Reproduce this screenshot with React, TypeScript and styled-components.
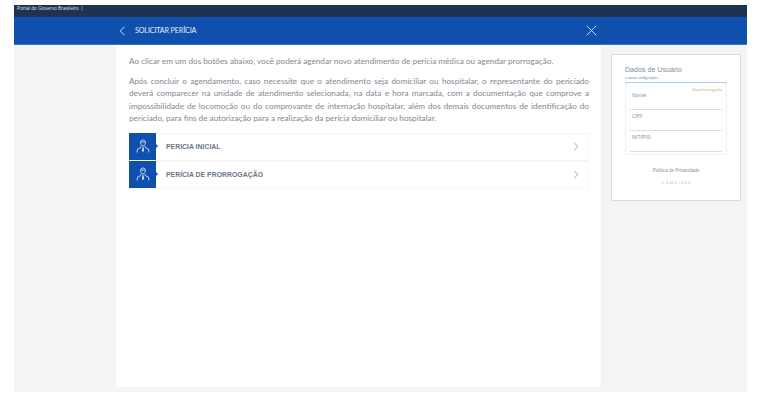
import React from "react";
import styled, { createGlobalStyle } from "styled-components";

const GlobalStyle = createGlobalStyle`
  html, body {
    margin: 0;
    padding: 0;
    background: #fff;
    font-family: "Lato", "Liberation Sans", sans-serif;
  }
`;

const Page = styled.div`
  width: 733px;
  height: 387px;
  margin: 5px 0 0 14px;
  display: flex;
  flex-direction: column;
  background: #f4f4f4;
`;

const GovBar = styled.div`
  height: 12px;
  flex: none;
  background: #1f3350;
  color: #d8dee8;
  font-family: "Liberation Sans", sans-serif;
  font-size: 4.9px;
  line-height: 8px;
  padding-left: 3px;
  box-sizing: border-box;
`;

const TitleBar = styled.div`
  height: 28px;
  flex: none;
  box-sizing: border-box;
  background: #0f50ae;
  border-bottom: 1px solid #3c73c0;
  padding: 0 150px 0 105px;
  display: flex;
  align-items: center;
  color: #e8eef8;
`;

const BackLink = styled.svg`
  width: 7px;
  height: 10px;
  margin-right: 9px;
`;

const PageTitle = styled.div`
  flex: 1;
  font-size: 7.2px;
  letter-spacing: -0.15px;
  color: #e6edf8;
`;

const CloseIcon = styled.svg`
  width: 11px;
  height: 11px;
`;

const Body = styled.div`
  flex: 1;
  display: flex;
  min-height: 0;
  padding-left: 102px;
  padding-bottom: 5px;
`;

const Main = styled.main`
  width: 485px;
  flex: none;
  background: #fff;
  box-sizing: border-box;
  padding: 10px 12px 0 13px;
`;

const Paragraph = styled.p<{ $justify?: boolean }>`
  margin: 0 0 7px;
  font-size: 8.2px;
  line-height: 12.6px;
  color: #83888f;
  text-align: ${(p) => (p.$justify ? "justify" : "left")};
`;

const Options = styled.div`
  margin-top: 8px;
  display: flex;
  flex-direction: column;
`;

const Option = styled.div`
  height: 28px;
  display: flex;
  align-items: center;
  border-top: 1px solid #f4f4f4;
  border-bottom: 1px solid #f6f6f6;
  border-right: 1px solid #f6f6f6;
  box-sizing: border-box;
`;

const OptionBadge = styled.div`
  position: relative;
  width: 27px;
  height: 27px;
  flex: none;
  background: #0f50ae;
  display: flex;
  align-items: center;
  justify-content: center;

  &::after {
    content: "";
    position: absolute;
    right: -2px;
    top: 11px;
    border-left: 2px solid #0f50ae;
    border-top: 2px solid transparent;
    border-bottom: 2px solid transparent;
  }
`;

const OptionLabel = styled.div`
  flex: 1;
  margin-left: 10px;
  font-family: "Liberation Sans", sans-serif;
  font-size: 6.9px;
  font-weight: 700;
  color: #6a7685;
`;

const Chevron = styled.svg`
  width: 6px;
  height: 9px;
  margin-right: 9px;
`;

const Aside = styled.aside`
  width: 130px;
  height: 147px;
  margin: 9px 0 0 10px;
  box-sizing: border-box;
  background: #fff;
  border: 1px solid #d9dcde;
  padding: 11px 13px 0 13px;
  display: flex;
  flex-direction: column;
`;

const AsideTitle = styled.div`
  font-family: "Liberation Sans", sans-serif;
  font-size: 7.1px;
  color: #7c8fa4;
  line-height: 9px;
`;

const AsideSub = styled.div`
  font-size: 3.4px;
  line-height: 5px;
  color: #7b8896;
  margin-top: 1px;
`;

const UserBox = styled.div`
  position: relative;
  height: 73px;
  margin-top: 1px;
  box-sizing: border-box;
  border: 1px solid #eef1f3;
  border-top: 1px solid #a9cce6;
  padding: 6px 4px 0 4px;
`;

const LoggedTag = styled.span`
  position: absolute;
  top: 4px;
  right: 4px;
  font-size: 4.4px;
  color: #cfae8c;
`;

const UserField = styled.div`
  height: 21px;
  box-sizing: border-box;
  border-bottom: 1px solid #d8dcdf;
  font-family: "Liberation Sans", sans-serif;
  font-size: 5.2px;
  line-height: 10px;
  color: #87929e;
  padding: 1px 0 0 2px;
`;

const AsideLink = styled.div`
  margin-top: 13px;
  text-align: center;
  font-family: "Liberation Sans", sans-serif;
  font-size: 4.6px;
  color: #8895a2;
`;

const Version = styled.div`
  margin-top: 7px;
  text-align: center;
  font-family: "Liberation Sans", sans-serif;
  font-size: 4.2px;
  color: #d6b08a;
`;

const AgentIcon = () => (
  <svg width="14" height="15" viewBox="0 0 14 15" fill="none" stroke="#d3e0f2" strokeWidth="0.9">
    <path d="M4.6 3.6C4.6 1.9 5.6 1 7 1s2.4.9 2.4 2.6S8.4 7 7 7 4.6 5.3 4.6 3.6z" />
    <path d="M4.6 3h4.8" />
    <path d="M5.2 7 4.4 8.8 1.6 10 1 13.4M8.8 7l.8 1.8 2.8 1.2.6 3.4" />
    <path d="M6.4 8.2 5.9 12 7 13l1.1-1-.5-3.8z" fill="#d3e0f2" stroke="none" />
  </svg>
);

const ChevronRight = () => (
  <Chevron viewBox="0 0 6 9" fill="none" stroke="#9aa0a6" strokeWidth="0.9">
    <path d="M1 .8 5 4.5 1 8.2" />
  </Chevron>
);

const options = ["PERICIA INICIAL", "PERÍCIA DE PRORROGAÇÃO"];
const userFields = ["Nome:", "CPF:", "NIT/PIS:"];

export default function App() {
  return (
    <>
      <GlobalStyle />
      <Page>
        <GovBar>Portal do Governo Brasileiro &nbsp;|</GovBar>
        <TitleBar>
          <BackLink viewBox="0 0 7 10" fill="none" stroke="#e6edf8" strokeWidth="0.9">
            <path d="M5.5.8 1.2 5l4.3 4.2" />
          </BackLink>
          <PageTitle>SOLICITAR PERÍCIA</PageTitle>
          <CloseIcon viewBox="0 0 11 11" fill="none" stroke="#dfe8f5" strokeWidth="0.9">
            <path d="M.7.7l9.6 9.6M10.3.7.7 10.3" />
          </CloseIcon>
        </TitleBar>
        <Body>
          <Main>
            <Paragraph>
              Ao clicar em um dos botões abaixo, você poderá agendar novo atendimento de perícia médica ou agendar prorrogação.
            </Paragraph>
            <Paragraph $justify>
              Após concluir o agendamento, caso necessite que o atendimento seja domiciliar ou hospitalar, o representante do periciado deverá comparecer na unidade de atendimento selecionada, na data e hora marcada, com a documentação que comprove a impossibilidade de locomoção ou do comprovante de internação hospitalar, além dos demais documentos de identificação do periciado, para fins de autorização para a realização da perícia domiciliar ou hospitalar.
            </Paragraph>
            <Options>
              {options.map((label) => (
                <Option key={label}>
                  <OptionBadge>
                    <AgentIcon />
                  </OptionBadge>
                  <OptionLabel>{label}</OptionLabel>
                  <ChevronRight />
                </Option>
              ))}
            </Options>
          </Main>
          <Aside>
            <AsideTitle>Dados de Usuário</AsideTitle>
            <AsideSub>e outras configurações</AsideSub>
            <UserBox>
              <LoggedTag>Usuário Logado</LoggedTag>
              {userFields.map((label) => (
                <UserField key={label}>{label}</UserField>
              ))}
            </UserBox>
            <AsideLink>Política de Privacidade</AsideLink>
            <Version>v. 3.10.1 - 1.5.2</Version>
          </Aside>
        </Body>
      </Page>
    </>
  );
}
